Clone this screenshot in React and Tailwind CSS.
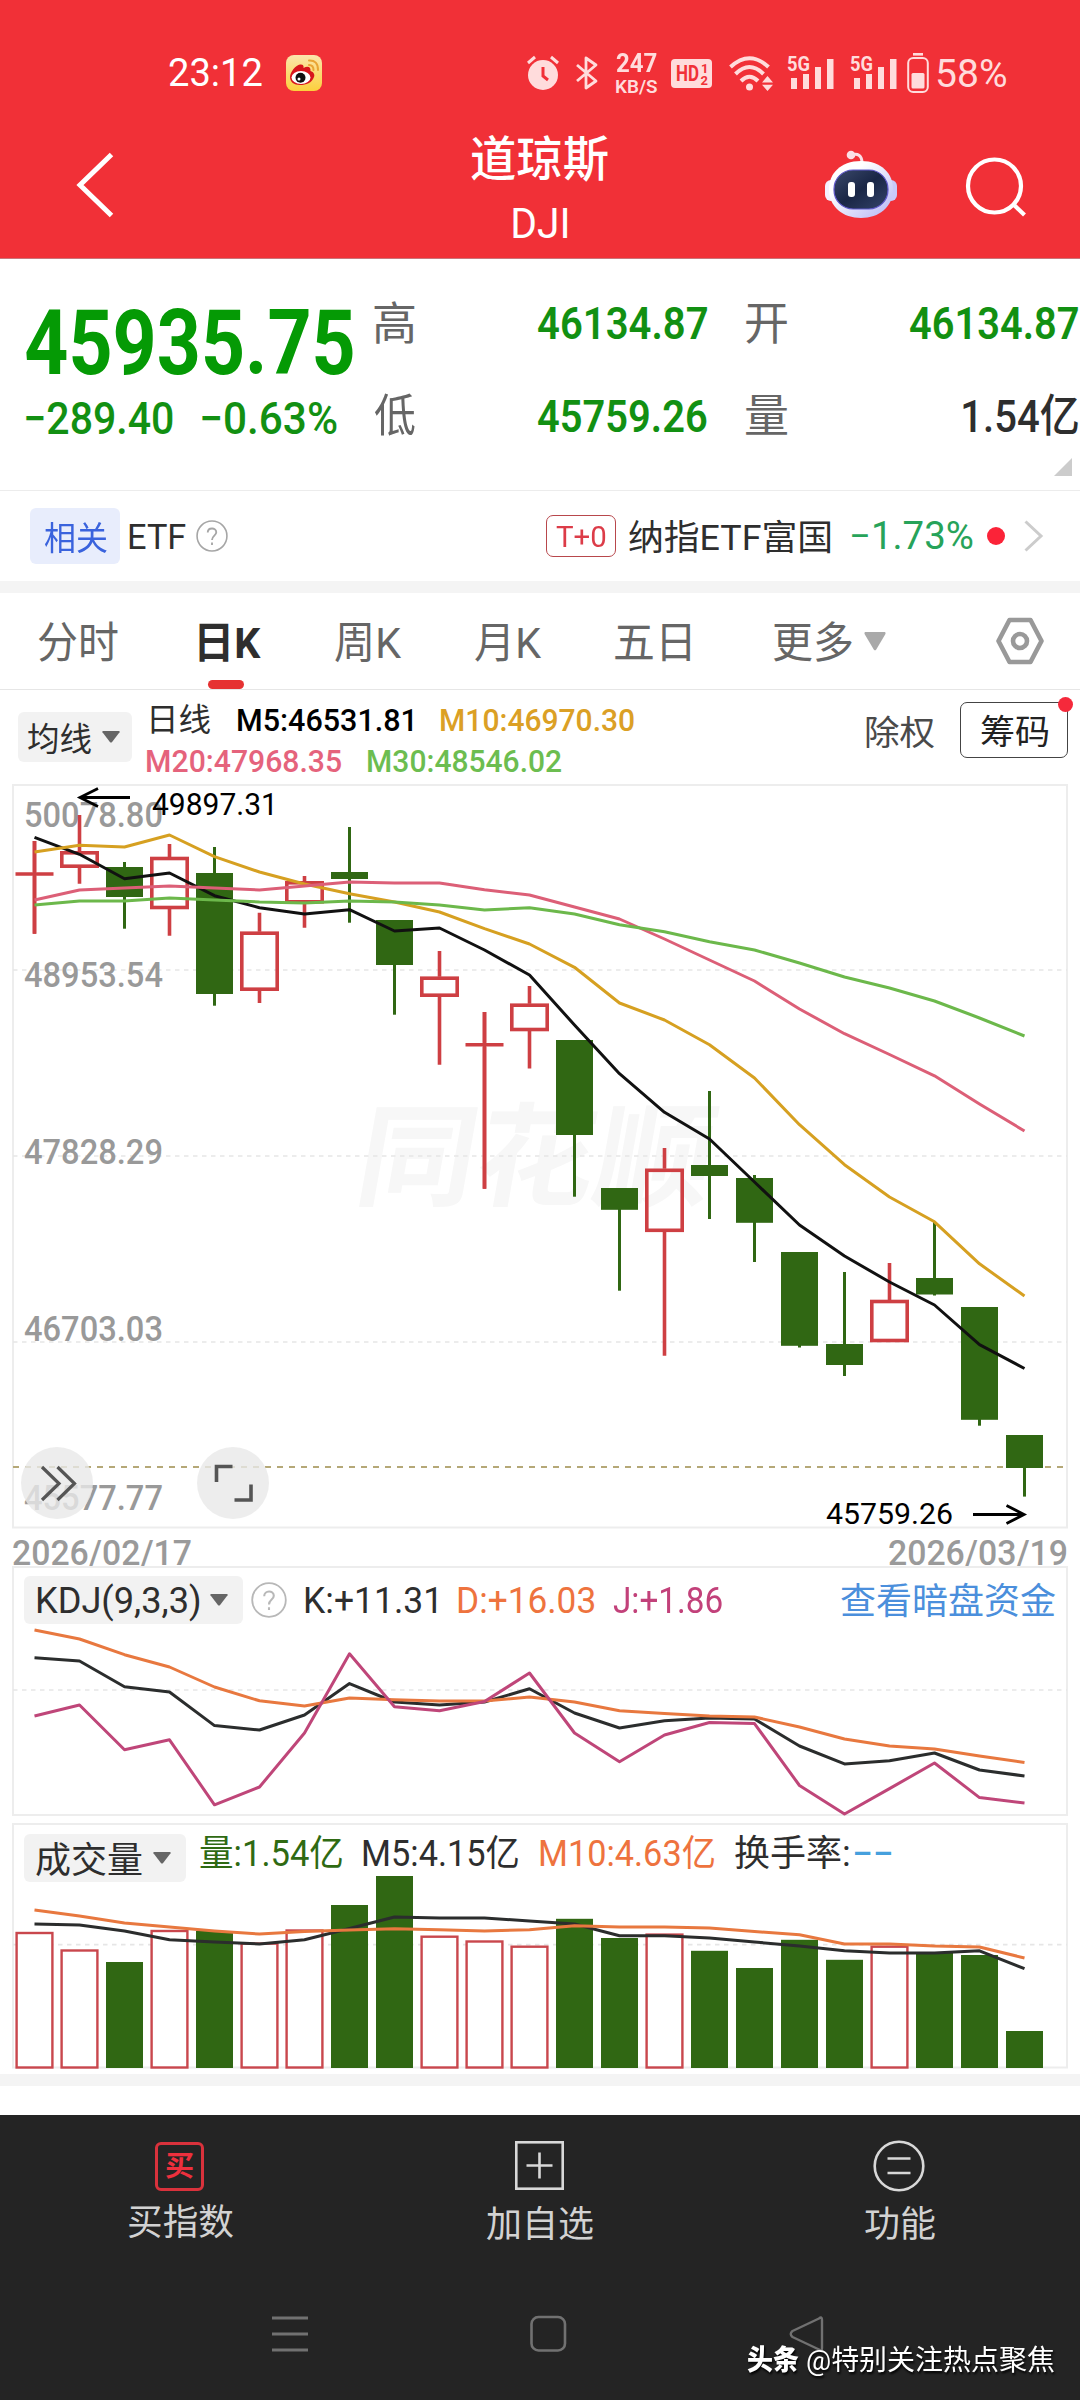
import React, { useLayoutEffect, useRef, useState } from "react";

const FONT = "font-[Roboto,'Noto_Sans_CJK_SC',sans-serif]";

/* A single line of text stretched horizontally so its ink fills the box. */
function Fit({ className = "", children }) {
  const box = useRef(null);
  const [transform, setTransform] = useState("none");
  useLayoutEffect(() => {
    const el = box.current;
    const ctx = document.createElement("canvas").getContext("2d");
    const cs = getComputedStyle(el);
    ctx.font = `${cs.fontWeight} ${cs.fontSize} ${cs.fontFamily}`;
    const m = ctx.measureText(children);
    const k = el.offsetWidth / (m.actualBoundingBoxLeft + m.actualBoundingBoxRight);
    setTransform(`translateX(${m.actualBoundingBoxLeft * k}px) scaleX(${k})`);
  }, [children]);
  return (
    <span ref={box} className={`block shrink-0 whitespace-pre leading-none ${className}`}>
      <span className="block w-max origin-left" style={{ transform }}>
        {children}
      </span>
    </span>
  );
}

const X = (i) => 34.5 + i * 45;
const line = (ys) => ys.map((y, i) => `${X(i)},${y}`).join(" ");

/* [rising, high, bodyTop, bodyBottom, low] */
const CANDLES = [
  [1, 841, 872, 876, 933.7],
  [1, 815, 851.3, 867.7, 883.7],
  [0, 862, 867, 897, 928.7],
  [1, 844, 857, 909, 935.7],
  [0, 847, 873, 994, 1005.7],
  [1, 912.7, 931.7, 990.7, 1003],
  [1, 876, 881.3, 903.3, 927.7],
  [0, 827, 872, 879, 922.7],
  [0, 920, 920, 965, 1014.7],
  [1, 951, 976.7, 996.7, 1064.8],
  [1, 1012, 1042.7, 1046.7, 1188.8],
  [1, 986, 1003.7, 1031, 1068.6],
  [0, 1040, 1040, 1135, 1196.7],
  [0, 1188, 1188, 1209.8, 1290.7],
  [1, 1148, 1168.8, 1231.8, 1355.8],
  [0, 1091, 1165, 1176, 1219],
  [0, 1175, 1178, 1222.8, 1262],
  [0, 1252, 1252, 1345.8, 1347.5],
  [0, 1272, 1344, 1365, 1376],
  [1, 1263, 1300, 1342, 1342],
  [0, 1221.8, 1278, 1294.5, 1295.5],
  [0, 1307, 1307, 1419.8, 1425.7],
  [0, 1435, 1435, 1468, 1496.6],
];
const MA5 = [837.3, 854.3, 878.7, 873, 895.7, 907.7, 914, 909.7, 931, 928, 950, 975, 1025, 1073.7, 1112.3, 1139, 1182, 1225, 1256, 1282, 1305, 1344.7, 1368.5];
const MA10 = [852, 845.3, 847, 835, 856.7, 872, 884, 893.7, 902, 912, 928.7, 944, 967.3, 1003, 1020, 1044.7, 1078, 1124.7, 1164.7, 1197, 1221.8, 1263.8, 1296];
const MA20 = [900, 890, 888, 886, 888, 890, 886, 882, 883, 883, 889.7, 895, 907, 919, 939, 960, 981, 1009, 1033.7, 1054.5, 1075.8, 1104, 1131];
const MA30 = [905, 901, 901, 898, 900, 902, 903, 901, 902, 905, 910, 907.7, 914, 924.7, 931.7, 941.7, 950, 963, 977, 988, 1001, 1018, 1036];
const KLINE = [1657.8, 1661, 1686.7, 1692, 1725.6, 1730, 1715, 1683.6, 1702, 1705, 1702, 1688.8, 1713, 1728, 1720.8, 1718, 1719, 1746, 1763.9, 1760.8, 1753, 1770, 1776];
const DLINE = [1630, 1639, 1654.7, 1667, 1687, 1700.8, 1706, 1698, 1699.8, 1701, 1701, 1697, 1702, 1710.8, 1713.6, 1716, 1717, 1727, 1739, 1746, 1749, 1756, 1762.5];
const JLINE = [1716, 1705, 1749.7, 1739.8, 1804.8, 1787, 1733, 1653.7, 1706.7, 1710.8, 1701.5, 1673, 1733, 1761.8, 1735, 1722.5, 1723.6, 1785.5, 1814, 1788.6, 1763, 1797.6, 1803];
const VOLUME = [1932, 1949.5, 1962, 1930, 1931, 1942.6, 1929.5, 1905, 1876, 1935.7, 1940.5, 1945.7, 1918.8, 1938, 1933.6, 1950.8, 1968, 1939.8, 1959.8, 1945.7, 1953, 1955, 2031];
const VMA5 = [1924, 1925, 1931, 1939.8, 1942, 1944, 1939.8, 1928.5, 1917, 1918, 1918, 1921, 1924, 1935.7, 1935.7, 1938, 1942, 1946, 1950.8, 1953, 1953, 1950.8, 1968.7];
const VMA10 = [1910, 1916, 1923, 1927, 1931, 1934, 1931.6, 1930, 1928.8, 1929.8, 1931, 1929.8, 1925.7, 1927, 1927, 1928, 1931.6, 1934.7, 1944, 1944, 1946, 1947, 1958];

function Poly({ ys, color, w = 3 }) {
  return <polyline points={line(ys)} fill="none" stroke={color} strokeWidth={w} strokeLinejoin="round" />;
}

function Grid({ y }) {
  return <line x1="13" x2="1067" y1={y} y2={y} stroke="#e6e6e6" strokeWidth="1.6" strokeDasharray="4.5 4.5" />;
}

function Signal() {
  return (
    <svg className="h-[38px] w-[47px] shrink-0 overflow-visible" viewBox="0 0 47 38" fill="#ffdcdc">
      <text x="0" y="17" fontSize="21" fontWeight="700" fontFamily="Roboto" textLength="23" lengthAdjust="spacingAndGlyphs">5G</text>
      <rect x="4" y="24" width="6" height="11" />
      <rect x="16" y="20" width="6" height="15" />
      <rect x="28" y="13" width="6" height="22" />
      <rect x="40" y="5" width="6.5" height="30" />
    </svg>
  );
}

function StatusBar() {
  return (
    <div className="mt-[44px] flex h-[58px] items-center pl-[169px] text-[#ffdcdc]">
      <Fit className="w-[93px] text-[39px] text-white">23:12</Fit>
      <svg className="ml-[24px] size-[36px] shrink-0" viewBox="0 0 36 36">
        <defs>
          <linearGradient id="wb" x1="0" y1="0" x2="0" y2="1">
            <stop offset="0" stopColor="#fbe5ad" />
            <stop offset="1" stopColor="#fcd03c" />
          </linearGradient>
        </defs>
        <rect width="36" height="36" rx="8" fill="url(#wb)" />
        <path d="M4 22C4 17 10 10 14 9.500C17 9 18 11 17.500 13C21 11 25 11 24.500 16C28 17 29 20 28 22C26 28 20 30 14 30C8 30 4 27 4 22Z" fill="#d8141c" />
        <ellipse cx="15" cy="22.500" rx="9.500" ry="6.500" fill="#fff" />
        <circle cx="14.500" cy="22.800" r="5" fill="#111" />
        <circle cx="13" cy="24" r="1.500" fill="#fff" />
        <path d="M23 5.500Q32 5 32 15M23 10Q27.500 10 27.500 15" fill="none" stroke="#e9a434" strokeWidth="2" strokeLinecap="round" />
      </svg>
      <svg className="ml-[204px] h-[36px] w-[34px] shrink-0" viewBox="0 0 34 36">
        <circle cx="17" cy="20" r="15" fill="#ffdcdc" />
        <path d="M2 8L9 2M32 8L25 2" stroke="#ffdcdc" strokeWidth="3" />
        <path d="M17 12V21L22 25" fill="none" stroke="#f13037" strokeWidth="3" />
      </svg>
      <svg className="ml-[16px] h-[34px] w-[22px] shrink-0" viewBox="0 0 22 34" fill="none" stroke="#ffdcdc" strokeWidth="2.800">
        <path d="M1 9L20 25L10 32V2L20 9L1 25" strokeLinejoin="round" />
      </svg>
      <div className="ml-[18px] flex flex-col gap-[1px]">
        <Fit className="w-[41px] text-[25px] leading-[18px] font-bold">247</Fit>
        <Fit className="w-[41px] text-[19px] leading-[18px] font-semibold">KB/S</Fit>
      </div>
      <svg className="ml-[14px] h-[29px] w-[41px] shrink-0" viewBox="0 0 41 29">
        <rect width="41" height="29" rx="4" fill="#ffdcdc" />
        <text x="5" y="22" fontSize="22" fontWeight="700" fontFamily="Roboto" fill="#f13037" textLength="23" lengthAdjust="spacingAndGlyphs">HD</text>
        <text x="30" y="13.500" fontSize="13" fontWeight="700" fontFamily="Roboto" fill="#f13037">1</text>
        <text x="29.500" y="25.500" fontSize="13" fontWeight="700" fontFamily="Roboto" fill="#f13037">2</text>
      </svg>
      <svg className="ml-[17px] h-[35px] w-[45px] shrink-0" viewBox="0 0 45 35">
        <g fill="none" stroke="#ffdcdc" strokeWidth="4">
          <path d="M1.500 11Q20.500 -6.500 39.500 11" />
          <path d="M6.500 18Q20.500 4 34.500 18" />
          <path d="M12 25Q20.500 16.500 29 25" />
        </g>
        <circle cx="20.500" cy="31" r="3.500" fill="#ffdcdc" />
        <path d="M33 26.500L38.500 20L44 26.500ZM33 28.800L38.500 35L44 28.800Z" fill="#ffdcdc" />
      </svg>
      <div className="ml-[13px] flex gap-[16px]">
        <Signal />
        <Signal />
      </div>
      <svg className="ml-[10px] h-[40px] w-[22px] shrink-0" viewBox="0 0 22 40">
        <rect x="6" y="0" width="10" height="2.600" fill="#ffdcdc" />
        <rect x="1.200" y="5" width="19.600" height="34" rx="5" fill="none" stroke="#ffdcdc" strokeWidth="2" />
        <rect x="4.500" y="20" width="13" height="15.500" rx="1.500" fill="#ffdcdc" />
      </svg>
      <Fit className="mt-[2px] ml-[8px] w-[69px] text-[39px]">58%</Fit>
    </div>
  );
}

function Header() {
  return (
    <header className="h-[259px] overflow-hidden border-b border-[#c9757a] bg-[#f13037] text-white">
      <StatusBar />
      <div className="flex h-[157px] pl-[74px]">
        <svg className="mt-[50px] h-[66px] w-[40px] shrink-0" viewBox="0 0 40 66" fill="none" stroke="#fff" strokeWidth="5">
          <path d="M37.500 2.500L6 33L37.500 63.500" />
        </svg>
        <div className="ml-[357px] flex w-[137px] flex-col items-center">
          <Fit className="mt-[34px] w-[137px] text-[48px] font-medium">道琼斯</Fit>
          <Fit className="mt-[18px] w-[54px] text-[43px]">DJI</Fit>
        </div>
        <svg className="mt-[48px] ml-[216px] h-[68px] w-[74px] shrink-0" viewBox="0 0 74 68">
          <defs>
            <linearGradient id="head" x1="0" y1="0" x2="1" y2="1">
              <stop offset="0.300" stopColor="#fff" />
              <stop offset="1" stopColor="#b3b4f5" />
            </linearGradient>
            <linearGradient id="face" x1="0" y1="0" x2="1" y2="1">
              <stop offset="0" stopColor="#3b4a6b" />
              <stop offset="0.500" stopColor="#1a2646" />
              <stop offset="1" stopColor="#33436a" />
            </linearGradient>
          </defs>
          <path d="M27 5Q38 2 38 13" fill="none" stroke="#fbdfe6" strokeWidth="3" />
          <circle cx="27" cy="5" r="4.300" fill="#fbdfe6" />
          <rect x="1" y="30" width="12" height="21" rx="6" fill="#f5efff" />
          <rect x="61" y="30" width="12" height="21" rx="6" fill="#c9c9fa" />
          <path d="M37 11C58 11 69 24 69 39C69 57 55 68 37 68C19 68 5 57 5 39C5 24 16 11 37 11Z" fill="url(#head)" />
          <rect x="10" y="20" width="54" height="39" rx="19" fill="url(#face)" stroke="#5f58c9" strokeWidth="1.200" />
          <rect x="24" y="32" width="7" height="15" rx="3" fill="#fff" />
          <rect x="43" y="32" width="7" height="15" rx="3" fill="#fff" />
        </svg>
        <svg className="mt-[53px] ml-[67px] h-[64px] w-[64px] shrink-0" viewBox="0 0 64 64" fill="none" stroke="#fff" strokeWidth="4.200">
          <circle cx="29.500" cy="31" r="26.500" />
          <path d="M48 49L59.500 60" />
        </svg>
      </div>
    </header>
  );
}

function Quote() {
  return (
    <section className="flex h-[232px] border-b border-[#ececec] bg-white text-[#129012]">
      <div className="ml-[26px] w-[327px]">
        <Fit className="mt-[39px] w-[327px] text-[91px] font-bold text-[#059a05]">45935.75</Fit>
        <div className="mt-[7px] flex justify-between pr-[16px]">
          <Fit className="w-[147px] text-[45px] font-medium">−289.40</Fit>
          <Fit className="w-[135px] text-[45px] font-medium">−0.63%</Fit>
        </div>
      </div>
      <div className="mt-[43px] ml-[21px] flex flex-col gap-[47px] text-[#666]">
        <Fit className="w-[41px] text-[45px]">高</Fit>
        <Fit className="w-[41px] text-[45px]">低</Fit>
      </div>
      <div className="mt-[42px] ml-[123px] flex flex-col gap-[48px]">
        <Fit className="w-[169px] text-[45px] font-semibold">46134.87</Fit>
        <Fit className="w-[169px] text-[45px] font-semibold">45759.26</Fit>
      </div>
      <div className="mt-[43px] ml-[39px] flex flex-col gap-[47px] text-[#666]">
        <Fit className="w-[41px] text-[45px]">开</Fit>
        <Fit className="w-[41px] text-[45px]">量</Fit>
      </div>
      <div className="mt-[42px] ml-[123px] flex w-[168px] flex-col items-end">
        <Fit className="w-[168px] text-[45px] font-semibold">46134.87</Fit>
        <Fit className="mt-[48px] w-[115px] text-[45px] font-medium text-[#2e2e2e]">1.54亿</Fit>
        <svg className="mt-[19px] mr-[6px] size-[18px]" viewBox="0 0 18 18">
          <path d="M18 0V18H0Z" fill="#ccc" />
        </svg>
      </div>
    </section>
  );
}

function Help({ className, stroke }) {
  return (
    <svg className={`shrink-0 ${className}`} viewBox="0 0 36 36" fill="none" stroke={stroke} strokeWidth="1.800">
      <circle cx="18" cy="18" r="16.800" />
      <path d="M13.200 14.200C13.200 8 22.800 8 22.800 13.800C22.800 17.600 18 17.600 18 22.500M18 25.300V28" strokeWidth="2.100" />
    </svg>
  );
}

function Related() {
  return (
    <section className="flex h-[90px] items-center bg-white pl-[30px] text-[#2e2e2e]">
      <div className="flex h-[56px] w-[90px] items-center justify-center rounded-[6px] bg-[#e8edfc] text-[#3a63dd]">
        <Fit className="mt-[4px] w-[63px] text-[33px]">相关</Fit>
      </div>
      <Fit className="mt-[3px] ml-[9px] w-[57px] text-[35px]">ETF</Fit>
      <Help className="ml-[10px] size-[32px]" stroke="#a6a6a6" />
      <div className="ml-[318px] flex h-[42px] w-[70px] items-center justify-center rounded-[7px] border border-[#b8474c] text-[#dc3c48]">
        <Fit className="mt-[1px] w-[50px] text-[30px]">T+0</Fit>
      </div>
      <Fit className="mt-[4px] ml-[13px] w-[201px] text-[35px]">纳指ETF富国</Fit>
      <Fit className="ml-[22px] w-[121px] text-[38px] text-[#27a35a]">−1.73%</Fit>
      <div className="ml-[14px] size-[18px] rounded-full bg-[#fb2338]" />
      <svg className="ml-[19px] h-[32px] w-[20px]" viewBox="0 0 20 32" fill="none" stroke="#ccc" strokeWidth="3">
        <path d="M1.500 1.500L17 16L1.500 30.500" />
      </svg>
    </section>
  );
}

function Down({ className, fill = "#666" }) {
  return (
    <svg className={`shrink-0 ${className}`} viewBox="0 0 20 14" preserveAspectRatio="none">
      <path d="M1 0H19Q20 .5 19.500 1.500L11 13Q10 14 9 13L.5 1.500Q0 .5 1 0Z" fill={fill} />
    </svg>
  );
}

function Tabs() {
  return (
    <nav className="flex h-[97px] items-center border-b border-[#e6e6e6] bg-white pl-[38px] text-[43px] text-[#666]">
      <Fit className="mt-[4px] w-[80px]">分时</Fit>
      <div className="relative ml-[81px]">
        <Fit className="mt-[4px] w-[62px] font-bold text-[#2e2e2e]">日K</Fit>
        <div className="absolute top-[62px] left-[9px] h-[9px] w-[36px] rounded-full bg-[#e63232]" />
      </div>
      <Fit className="mt-[4px] ml-[74px] w-[66px]">周K</Fit>
      <Fit className="mt-[4px] ml-[74px] w-[66px]">月K</Fit>
      <Fit className="mt-[4px] ml-[74px] w-[75px]">五日</Fit>
      <Fit className="mt-[4px] ml-[84px] w-[78px]">更多</Fit>
      <Down className="ml-[12px] h-[19px] w-[22px]" fill="#a9a9a9" />
      <svg className="ml-[109px] h-[48px] w-[50px]" viewBox="0 0 50 48" fill="none" stroke="#999" strokeWidth="4.600" strokeLinejoin="round">
        <path d="M14.500 3H35.500L46.500 24L35.500 45H14.500L3.500 24Z" />
        <circle cx="25" cy="24" r="7" />
      </svg>
    </nav>
  );
}

function Averages() {
  return (
    <section className="flex h-[94px] bg-white pl-[18px]">
      <div className="mt-[22px] flex h-[50px] w-[114px] items-center rounded-[6px] bg-[#f2f2f2] pl-[10px] text-[#2e2e2e]">
        <Fit className="mt-[4px] w-[63px] text-[33px]">均线</Fit>
        <Down className="ml-[11px] h-[12px] w-[18px]" />
      </div>
      <div className="mt-[13px] ml-[15px] flex w-[487px] flex-col">
        <div className="flex h-[33px] items-center pl-[4px]">
          <Fit className="w-[59px] text-[32px] text-[#2e2e2e]">日线</Fit>
          <Fit className="ml-[28px] w-[174px] text-[32px] font-medium text-black">M5:46531.81</Fit>
          <Fit className="ml-[29px] w-[193px] text-[32px] font-medium text-[#dba025]">M10:46970.30</Fit>
        </div>
        <div className="mt-[8px] flex h-[33px] items-center">
          <Fit className="w-[194px] text-[32px] font-medium text-[#e5637c]">M20:47968.35</Fit>
          <Fit className="ml-[27px] w-[193px] text-[32px] font-medium text-[#6cbd50]">M30:48546.02</Fit>
        </div>
      </div>
      <Fit className="mt-[26px] ml-[232px] w-[68px] text-[34px] text-[#4a4a4a]">除权</Fit>
      <div className="relative mt-[12px] ml-[26px] flex h-[56px] w-[108px] items-center justify-center rounded-[7px] border border-[#444] text-[#222]">
        <Fit className="mt-[4px] w-[67px] text-[34px]">筹码</Fit>
        <div className="absolute -top-[6px] -right-[6px] size-[15px] rounded-full bg-[#f5293b]" />
      </div>
    </section>
  );
}

const AXIS = [
  ["50078.80", 827],
  ["48953.54", 987],
  ["47828.29", 1164],
  ["46703.03", 1341],
  ["45577.77", 1510],
];

function CandleChart() {
  return (
    <section className="relative h-[782px] bg-white">
      <svg className="block h-[782px] w-[1080px] overflow-visible" viewBox="0 784 1080 782" fontFamily="Roboto">
        <rect x="13" y="785" width="1054" height="742.500" fill="none" stroke="#ededed" strokeWidth="2" />
        <text x="352" y="1197" transform="translate(211 0) skewX(-10)" fontFamily="Noto Sans CJK SC" fontWeight="700" fontSize="112" fill="#f7f7f7" textLength="356" lengthAdjust="spacingAndGlyphs">同花顺</text>
        <Grid y={970} />
        <Grid y={1156} />
        <Grid y={1342} />
        <line x1="13" x2="1067" y1="1467" y2="1467" stroke="#b5a877" strokeWidth="1.800" strokeDasharray="6 6" />
        {AXIS.map(([t, y]) => (
          <text key={t} x="24" y={y} fontSize="35" fontWeight="500" fill="#999" textLength="139" lengthAdjust="spacingAndGlyphs">{t}</text>
        ))}
        {CANDLES.map(([up, hi, top, bottom, lo], i) =>
          up ? (
            <g key={i} stroke="#ce3f43" strokeWidth="3.600" fill="none">
              <path d={`M${X(i)} ${hi}V${top}M${X(i)} ${bottom}V${lo}`} />
              {bottom - top < 5 ? (
                <path d={`M${X(i) - 19} ${(top + bottom) / 2}h38M${X(i)} ${hi}V${lo}`} />
              ) : (
                <rect x={X(i) - 17.7} y={top + 1.5} width="35.400" height={bottom - top - 3} />
              )}
            </g>
          ) : (
            <g key={i} fill="#306713">
              <rect x={X(i) - 1.5} y={hi} width="3" height={lo - hi} />
              <rect x={X(i) - 18.5} y={top} width="37" height={bottom - top} />
            </g>
          )
        )}
        <Poly ys={MA5} color="#111" />
        <Poly ys={MA10} color="#d6a021" />
        <Poly ys={MA20} color="#dc5f77" />
        <Poly ys={MA30} color="#6cb84b" />
        <path d="M130 797.500H80M98 788.500L80 797.500L98 806.500" fill="none" stroke="#000" strokeWidth="2.800" />
        <text x="152" y="815" fontSize="30.500" textLength="126" lengthAdjust="spacingAndGlyphs">49897.31</text>
        <path d="M973 1514.500H1024M1006.500 1505.500L1024 1514.500L1006.500 1523.500" fill="none" stroke="#000" strokeWidth="2.800" />
        <text x="826" y="1524" fontSize="30" textLength="127" lengthAdjust="spacingAndGlyphs">45759.26</text>
        <g fontSize="35" fontWeight="500" fill="#9a9a9a">
          <text x="12" y="1564.500" textLength="180" lengthAdjust="spacingAndGlyphs">2026/02/17</text>
          <text x="888" y="1564.500" textLength="180" lengthAdjust="spacingAndGlyphs">2026/03/19</text>
        </g>
      </svg>
      <div className="absolute top-[663px] left-[21px] flex gap-[104px]">
        <svg className="size-[72px]" viewBox="0 0 72 72">
          <circle cx="36" cy="36" r="36" fill="#e8e8e8" fillOpacity="0.800" />
          <path d="M21 20L38 36.500L21 53M36.500 20L53.500 36.500L36.500 53" fill="none" stroke="#555" strokeWidth="3.200" />
        </svg>
        <svg className="size-[72px]" viewBox="0 0 72 72">
          <circle cx="36" cy="36" r="36" fill="#e8e8e8" fillOpacity="0.800" />
          <path d="M19.500 35V19.500H35.500M37.500 53H54V37.500" fill="none" stroke="#555" strokeWidth="3.600" />
        </svg>
      </div>
    </section>
  );
}

function Kdj() {
  return (
    <section className="relative h-[257px]">
      <svg className="absolute inset-0 h-[257px] w-[1080px]" viewBox="0 1566 1080 257">
        <path d="M13 1567H1067V1815H13Z" fill="none" stroke="#ededed" strokeWidth="2" />
        <Grid y={1690} />
        <Poly ys={KLINE} color="#2b2d2d" />
        <Poly ys={DLINE} color="#e8783f" />
        <Poly ys={JLINE} color="#bf4679" />
      </svg>
      <div className="relative flex items-center pt-[10px] pl-[24px] text-[36px]">
        <div className="flex h-[48px] w-[219px] items-center rounded-[6px] bg-[#f2f2f2] pl-[13px] text-[#2e2e2e]">
          <Fit className="mt-[2px] w-[162px]">KDJ(9,3,3)</Fit>
          <Down className="ml-[11px] h-[12px] w-[18px]" />
        </div>
        <Help className="ml-[8px] size-[36px]" stroke="#b8b8b8" />
        <Fit className="mt-[2px] ml-[18px] w-[131px] text-[#2e2e2e]">K:+11.31</Fit>
        <Fit className="mt-[2px] ml-[22px] w-[136px] text-[#ee733e]">D:+16.03</Fit>
        <Fit className="mt-[2px] ml-[19px] w-[109px] text-[#c2417a]">J:+1.86</Fit>
        <Fit className="mt-[4px] ml-[119px] w-[214px] text-[#4b8fdc]">查看暗盘资金</Fit>
      </div>
    </section>
  );
}

function Volume() {
  return (
    <section className="relative h-[251px] bg-white">
      <svg className="absolute inset-0 h-[251px] w-[1080px]" viewBox="0 1823 1080 251">
        <path d="M13 1824H1067V2067.500H13Z" fill="none" stroke="#ededed" strokeWidth="2" />
        <Grid y={1944.6} />
        {VOLUME.map((top, i) =>
          CANDLES[i][0] ? (
            <rect key={i} x={X(i) - 17.9} y={top + 1} width="35.800" height={2066.5 - top} fill="#fff" stroke="#c9474d" strokeWidth="2.400" />
          ) : (
            <rect key={i} x={X(i) - 18.5} y={top} width="37" height={2068 - top} fill="#306713" />
          )
        )}
        <Poly ys={VMA5} color="#2b2d2d" />
        <Poly ys={VMA10} color="#e8783f" />
      </svg>
      <div className="relative flex pl-[24px] text-[36px] text-[#2e2e2e]">
        <div className="mt-[11px] flex h-[48px] w-[162px] items-center rounded-[6px] bg-[#f2f2f2] pl-[12px]">
          <Fit className="mt-[5px] w-[106px]">成交量</Fit>
          <Down className="ml-[11px] h-[12px] w-[18px]" />
        </div>
        <div className="mt-[13px] ml-[14px] flex">
          <Fit className="w-[142px] text-[#2f6a13]">量:1.54亿</Fit>
          <Fit className="ml-[21px] w-[155px]">M5:4.15亿</Fit>
          <Fit className="ml-[22px] w-[174px] text-[#ee733e]">M10:4.63亿</Fit>
          <Fit className="ml-[21px] w-[114px]">换手率:</Fit>
          <Fit className="ml-[5px] w-[37px] font-medium text-[#46a0dd]">−−</Fit>
        </div>
      </div>
    </section>
  );
}

function BottomBar() {
  return (
    <footer className="h-[285px] bg-[#242424] text-[#d2d2d2]">
      <div className="flex h-[150px] pl-[128px] text-[36px]">
        <div className="flex w-[105px] flex-col items-center pt-[27px]">
          <div className="mr-[2px] flex size-[49px] items-center justify-center rounded-[6px] border-[3px] border-[#d9323c] text-[#ee303d]">
            <Fit className="w-[27px] text-[28px] font-bold">买</Fit>
          </div>
          <Fit className="mt-[14px] w-[105px]">买指数</Fit>
        </div>
        <div className="ml-[254px] flex w-[106px] flex-col items-center pt-[26px]">
          <svg className="mr-[2px] size-[49px]" viewBox="0 0 49 49" fill="none" stroke="#d8d8d8" strokeWidth="2.600">
            <rect x="1.300" y="1.300" width="46.400" height="46.400" />
            <path d="M11.500 24.500H37.500M24.500 11.500V37.500" />
          </svg>
          <Fit className="mt-[17px] w-[106px]">加自选</Fit>
        </div>
        <div className="ml-[272px] flex w-[70px] flex-col items-center pt-[25px]">
          <svg className="mr-[2px] size-[52px]" viewBox="0 0 52 52" fill="none" stroke="#d8d8d8" strokeWidth="2.600">
            <circle cx="26" cy="26" r="24.300" />
            <path d="M14.500 18.500H37.500M14.500 33H37.500" />
          </svg>
          <Fit className="mt-[15px] w-[70px]">功能</Fit>
        </div>
      </div>
      <div className="relative h-[135px]">
        <div className="flex pt-[50px] pl-[272px]">
          <svg className="size-[37px]" viewBox="0 0 37 37" stroke="#717171" strokeWidth="2.800">
            <path d="M0 3H36M0 19H36M0 35H36" />
          </svg>
          <svg className="ml-[221px] size-[37px]" viewBox="0 0 37 37" fill="none" stroke="#717171" strokeWidth="2.600">
            <rect x="1.500" y="2" width="33.500" height="33.500" rx="7" />
          </svg>
          <svg className="ml-[221px] size-[37px]" viewBox="0 0 37 37" fill="none" stroke="#717171" strokeWidth="2.400" strokeLinejoin="round">
            <path d="M31 3.500Q34 1 34 5V33Q34 37 31 34.500L4.500 22Q1 19 4.500 16Z" />
          </svg>
        </div>
        <div className="absolute top-[81px] left-[747px] flex h-[30px] items-center text-[28px] text-white drop-shadow-[1.5px_2px_1px_rgba(0,0,0,1)]">
          <Fit className="w-[52px] font-black">头条</Fit>
          <Fit className="ml-[8px] w-[247px]">@特别关注热点聚焦</Fit>
        </div>
      </div>
    </footer>
  );
}

export default function App() {
  return (
    <main className={`h-[2400px] w-[1080px] overflow-hidden bg-white ${FONT}`}>
      <Header />
      <Quote />
      <Related />
      <div className="h-[12px] bg-[#f4f4f4]" />
      <Tabs />
      <Averages />
      <CandleChart />
      <Kdj />
      <Volume />
      <div className="mb-[29px] h-[12px] bg-[#f4f4f4]" />
      <BottomBar />
    </main>
  );
}
